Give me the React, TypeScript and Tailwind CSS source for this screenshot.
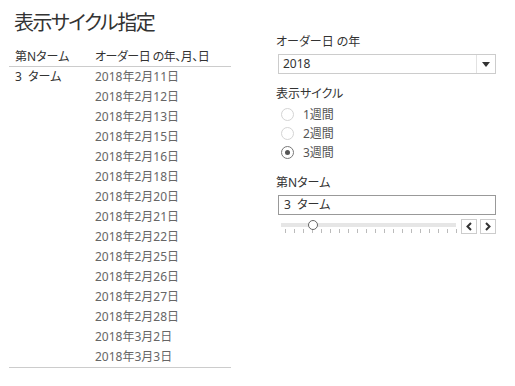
import React from "react";

const dates = [
  "2018年2月11日",
  "2018年2月12日",
  "2018年2月13日",
  "2018年2月15日",
  "2018年2月16日",
  "2018年2月18日",
  "2018年2月20日",
  "2018年2月21日",
  "2018年2月22日",
  "2018年2月25日",
  "2018年2月26日",
  "2018年2月27日",
  "2018年2月28日",
  "2018年3月2日",
  "2018年3月3日",
];

const font = { fontFamily: '"Noto Sans", "Noto Sans CJK JP", sans-serif' };

function Radio({ label, checked }: { label: string; checked?: boolean }) {
  return (
    <div className="flex items-center h-[19px]">
      <div
        className={
          "ml-[5px] w-[13px] h-[13px] rounded-full border flex items-center justify-center " +
          (checked ? "border-[#777]" : "border-[#d4d4d4]")
        }
      >
        {checked && <div className="w-[5px] h-[5px] rounded-full bg-[#555]" />}
      </div>
      <span className="ml-[9px] text-[12px] text-[#555]">{label}</span>
    </div>
  );
}

export default function App() {
  const ticks = Array.from({ length: 20 }, (_, i) => i);
  return (
    <div className="w-[515px] h-[386px] bg-white flex [font-feature-settings:'palt']" style={font}>
      <div className="w-[222px] ml-[9px] flex flex-col">
        <div className="h-[48px] flex items-center pl-[5px] pb-[2px] text-[20px] tracking-[-1.5px] text-[#333] leading-none">
          表示サイクル指定
        </div>
        <div className="h-[19px] flex items-center border-b border-[#ccc] text-[12px] text-[#333] leading-none">
          <span className="w-[86px] pl-[6px]">第Nターム</span>
          <span className="tracking-[-0.5px]">オーダー日 の年、月、日</span>
        </div>
        <div className="flex border-b border-[#ccc]">
          <div className="w-[86px] pl-[6px] h-[20px] flex items-center text-[12px] text-[#333]">
            3&nbsp; ターム
          </div>
          <div className="flex flex-col">
            {dates.map((d) => (
              <div key={d} className="h-[20px] flex items-center text-[12px] text-[#666]">
                {d}
              </div>
            ))}
          </div>
        </div>
      </div>
      <div className="ml-[45px] w-[220px] pt-[34px] flex flex-col">
        <div className="h-[16px] flex items-center text-[12px] text-[#333]">オーダー日 の年</div>
        <div className="mt-[4px] ml-[2px] h-[20px] border border-[#ccc] flex items-center">
          <span className="flex-1 pl-[4px] text-[12px] text-[#333]">2018</span>
          <div className="w-[19px] h-full border-l border-[#e2e2e2] flex items-center justify-center">
            <svg width="8" height="5" viewBox="0 0 8 5">
              <path d="M0 0 L8 0 L4 5 Z" fill="#333" />
            </svg>
          </div>
        </div>
        <div className="mt-[12px] h-[16px] flex items-center text-[12px] text-[#333]">表示サイクル</div>
        <div className="mt-[3px] flex flex-col">
          <Radio label="1週間" />
          <Radio label="2週間" />
          <Radio label="3週間" checked />
        </div>
        <div className="mt-[13px] h-[16px] flex items-center text-[12px] text-[#333]">第Nターム</div>
        <div className="mt-[4px] ml-[2px] h-[20px] border border-[#999] flex items-center pl-[5px] text-[12px] text-[#333]">
          3&nbsp; ターム
        </div>
        <div className="mt-[4px] ml-[2px] h-[15px] flex items-start">
          <div className="relative w-[175px] ml-[3px] h-[15px]">
            <div className="absolute left-0 right-0 top-[4px] h-[4px] bg-[#e6e6e6]" />
            <div className="absolute left-[4px] top-[10px] flex gap-[8px]">
              {ticks.map((t) => (
                <div key={t} className="w-[1px] h-[4px] bg-[#bbb]" />
              ))}
            </div>
            <div className="absolute left-[27px] top-[1px] w-[10px] h-[10px] rounded-full border border-[#666] bg-white" />
          </div>
          <div className="ml-[5px] w-[16px] h-[15px] border border-[#ccc] flex items-center justify-center">
            <svg width="8" height="9" viewBox="0 0 8 9">
              <path d="M6 1 L2.5 4.5 L6 8" stroke="#333" strokeWidth="2" fill="none" />
            </svg>
          </div>
          <div className="ml-[3px] w-[16px] h-[15px] border border-[#ccc] flex items-center justify-center">
            <svg width="8" height="9" viewBox="0 0 8 9">
              <path d="M2 1 L5.5 4.5 L2 8" stroke="#333" strokeWidth="2" fill="none" />
            </svg>
          </div>
        </div>
      </div>
    </div>
  );
}
